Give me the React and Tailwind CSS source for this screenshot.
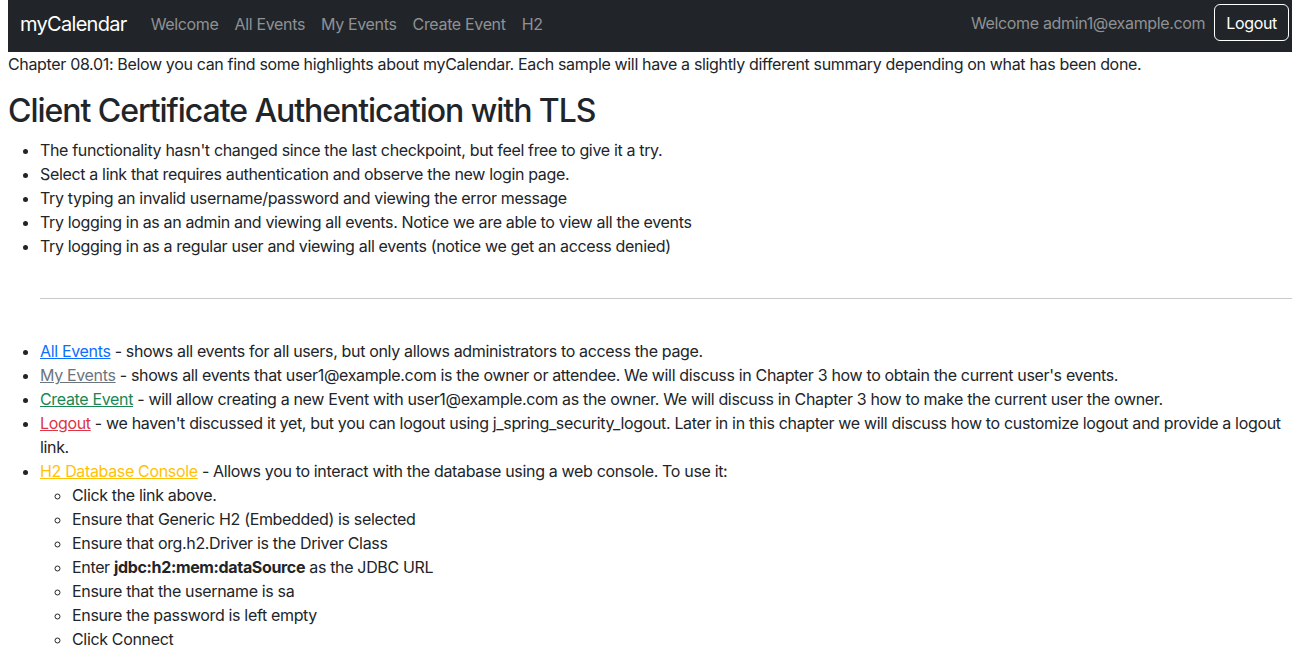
export default function App() {
  const font = { fontFamily: "Inter, 'Noto Sans', sans-serif" };
  return (
    <div className="pl-2 text-[16px] leading-6 tracking-[-0.34px] text-[#212529] bg-white min-h-[657px]" style={font}>
      <nav className="h-[52px] bg-[#212529] flex items-center justify-between pl-3 pr-[3px] pb-1">
        <div className="flex items-center">
          <span className="text-white text-[20px] tracking-[-0.7px] mr-4">myCalendar</span>
          <div className="flex items-center text-[#8f9194]">
            <span className="px-2">Welcome</span>
            <span className="px-2">All Events</span>
            <span className="px-2">My Events</span>
            <span className="px-2">Create Event</span>
            <span className="px-2">H2</span>
          </div>
        </div>
        <div className="flex items-center self-start mt-1">
          <span className="text-[#8f9194] mr-[9px]">Welcome admin1@example.com</span>
          <button className="border border-white rounded-md text-white px-[11px] h-[37px]">Logout</button>
        </div>
      </nav>
      <p className="mb-4">Chapter 08.01: Below you can find some highlights about myCalendar. Each sample will have a slightly different summary depending on what has been done.</p>
      <h2 className="text-[32px] leading-[38px] font-medium tracking-[-1.05px] mb-2">Client Certificate Authentication with TLS</h2>
      <ul className="list-disc pl-8 mb-4">
        <li>The functionality hasn't changed since the last checkpoint, but feel free to give it a try.</li>
        <li>Select a link that requires authentication and observe the new login page.</li>
        <li>Try typing an invalid username/password and viewing the error message</li>
        <li>Try logging in as an admin and viewing all events. Notice we are able to view all the events</li>
        <li>Try logging in as a regular user and viewing all events (notice we get an access denied)</li>
      </ul>
      <div className="pl-8 pt-6">
        <hr className="border-0 border-t border-[#c8c9ca]" />
      </div>
      <ul className="list-disc pl-8 mt-10">
        <li><a className="text-[#0d6efd] underline">All Events</a> - shows all events for all users, but only allows administrators to access the page.</li>
        <li><a className="text-[#6c757d] underline">My Events</a> - shows all events that user1@example.com is the owner or attendee. We will discuss in Chapter 3 how to obtain the current user's events.</li>
        <li><a className="text-[#198754] underline">Create Event</a> - will allow creating a new Event with user1@example.com as the owner. We will discuss in Chapter 3 how to make the current user the owner.</li>
        <li><a className="text-[#dc3545] underline">Logout</a> - we haven't discussed it yet, but you can logout using j_spring_security_logout. Later in in this chapter we will discuss how to customize logout and provide a logout link.</li>
        <li><a className="text-[#ffc107] underline">H2 Database Console</a> - Allows you to interact with the database using a web console. To use it:
          <ul className="list-[circle] pl-8">
            <li>Click the link above.</li>
            <li>Ensure that Generic H2 (Embedded) is selected</li>
            <li>Ensure that org.h2.Driver is the Driver Class</li>
            <li>Enter <b>jdbc:h2:mem:dataSource</b> as the JDBC URL</li>
            <li>Ensure that the username is sa</li>
            <li>Ensure the password is left empty</li>
            <li>Click Connect</li>
          </ul>
        </li>
      </ul>
    </div>
  );
}
